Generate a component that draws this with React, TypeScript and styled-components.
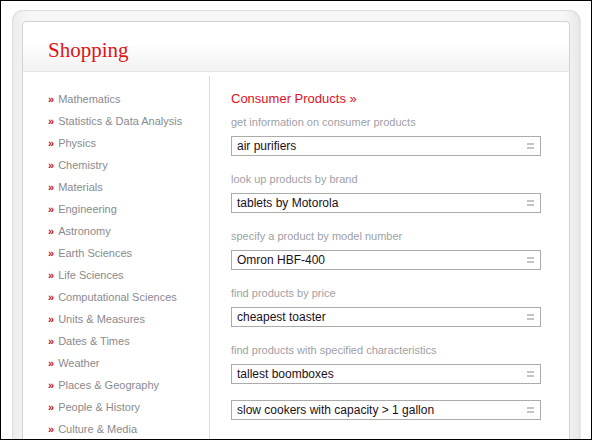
import React from "react";
import styled, { createGlobalStyle } from "styled-components";

const GlobalStyle = createGlobalStyle`
  html, body {
    margin: 0;
    padding: 0;
    background: #fff;
  }
`;

const Screen = styled.div`
  width: 592px;
  height: 440px;
  box-sizing: border-box;
  border: 1px solid #000;
  overflow: hidden;
  background: #fff;
  padding: 9px 11px 0 11px;
`;

const Frame = styled.div`
  height: 460px;
  box-sizing: border-box;
  padding: 10px 9px 0 9px;
  border: 1px solid #dcdcdc;
  border-bottom: none;
  border-radius: 11px 11px 0 0;
  background: linear-gradient(to right, #ececec, #f7f7f7 3%, #f7f7f7 97%, #e9e9e9);
  box-shadow: 1px 0 1px rgba(0, 0, 0, 0.08);
`;

const Panel = styled.div`
  height: 100%;
  background: #fff;
  border: 1px solid #d2d2d2;
  border-bottom: none;
  border-radius: 5px 5px 0 0;
`;

const Header = styled.div`
  height: 50px;
  box-sizing: border-box;
  padding: 16px 0 0 25px;
  border-bottom: 1px solid #e6e6e6;
  border-radius: 5px 5px 0 0;
  background: linear-gradient(#ffffff 45%, #f1f1f1);
`;

const Title = styled.h1`
  margin: 0;
  font-family: "Liberation Serif", "Times New Roman", serif;
  font-weight: normal;
  font-size: 21px;
  line-height: 24px;
  color: #dd1515;
`;

const Body = styled.div`
  display: grid;
  grid-template-columns: 187px 1fr;
  margin-top: 4px;
  height: 400px;
`;

const Sidebar = styled.ul`
  list-style: none;
  margin: 0;
  padding: 12px 0 0 25px;
  border-right: 1px solid #dddddd;
`;

const Topic = styled.li`
  font-family: "Liberation Sans", Arial, sans-serif;
  font-size: 11px;
  line-height: 22px;
  color: #8a8a8e;
  white-space: nowrap;
`;

const Chevron = styled.span`
  color: #cc0f0f;
  font-weight: bold;
  margin-right: 4px;
`;

const Content = styled.div`
  padding: 15px 0 0 21px;
  font-family: "Liberation Sans", Arial, sans-serif;
`;

const SectionTitle = styled.h2`
  margin: 0 0 8px 0;
  font-size: 13px;
  font-weight: normal;
  line-height: 16px;
  color: #e0101e;
`;

const Example = styled.div<{ $first?: boolean }>`
  margin-top: ${(p) => (p.$first ? 0 : 16)}px;
`;

const Hint = styled.div`
  font-size: 11px;
  line-height: 14px;
  color: #a0a0a4;
  margin-bottom: 7px;
`;

const QueryBox = styled.div`
  width: 310px;
  height: 20px;
  box-sizing: border-box;
  border: 1px solid #ababab;
  display: flex;
  align-items: center;
  justify-content: space-between;
  padding: 0 6px 0 5px;
  font-size: 12px;
  line-height: 18px;
  color: #1a1020;
`;

const EqualsIcon = () => (
  <svg width="7" height="6" viewBox="0 0 7 6" style={{ display: "block" }}>
    <rect x="0" y="0" width="7" height="2" fill="#c4c4c4" />
    <rect x="0" y="4" width="7" height="2" fill="#c4c4c4" />
  </svg>
);

const topics = [
  "Mathematics",
  "Statistics & Data Analysis",
  "Physics",
  "Chemistry",
  "Materials",
  "Engineering",
  "Astronomy",
  "Earth Sciences",
  "Life Sciences",
  "Computational Sciences",
  "Units & Measures",
  "Dates & Times",
  "Weather",
  "Places & Geography",
  "People & History",
  "Culture & Media",
];

const examples = [
  { hint: "get information on consumer products", query: "air purifiers" },
  { hint: "look up products by brand", query: "tablets by Motorola" },
  { hint: "specify a product by model number", query: "Omron HBF-400" },
  { hint: "find products by price", query: "cheapest toaster" },
  { hint: "find products with specified characteristics", query: "tallest boomboxes" },
  { hint: "", query: "slow cookers with capacity > 1 gallon" },
];

const App: React.FC = () => {
  return (
    <Screen>
      <GlobalStyle />
      <Frame>
        <Panel>
          <Header>
            <Title>Shopping</Title>
          </Header>
          <Body>
            <Sidebar>
              {topics.map((t) => (
                <Topic key={t}>
                  <Chevron>»</Chevron>
                  {t}
                </Topic>
              ))}
            </Sidebar>
            <Content>
              <SectionTitle>Consumer Products »</SectionTitle>
              {examples.map((ex, i) => (
                <Example key={ex.query} $first={i === 0}>
                  {ex.hint && <Hint>{ex.hint}</Hint>}
                  <QueryBox>
                    <span>{ex.query}</span>
                    <EqualsIcon />
                  </QueryBox>
                </Example>
              ))}
            </Content>
          </Body>
        </Panel>
      </Frame>
    </Screen>
  );
};

export default App;
